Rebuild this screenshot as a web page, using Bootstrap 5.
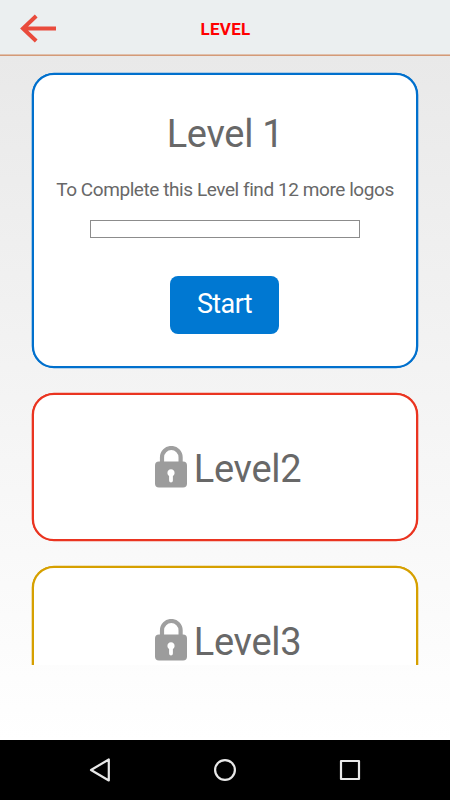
<!DOCTYPE html>
<html lang="en">
<head>
<meta charset="utf-8">
<meta name="viewport" content="width=device-width, initial-scale=1">
<title>Level</title>
<link href="https://cdn.jsdelivr.net/npm/bootstrap@5.3.0/dist/css/bootstrap.min.css" rel="stylesheet">
<style>
body { font-family: Roboto, "Liberation Sans", sans-serif; color: #686868; background: linear-gradient(#e9e9e9 56px, #fff 740px); }
.topbar { height: 56px; background: #ebeff0; border-bottom: 1px solid #d39a78; box-shadow: inset 0 -1px #e0c0ac; padding: 0 20px 0 19px; }
.topbar svg, .topbar-end { width: 38px; }
.topbar-title { font-size: 17px; line-height: 20px; font-weight: 700; letter-spacing: .3px; color: #f00; padding: 2px 0 0 2px; }
.levels { height: 609px; padding: 17px 32px 0; gap: 25px; }
.level-card { border: 2px solid var(--edge); box-shadow: 0 0 0 .3px var(--edge); border-radius: 22px; background: #fff; }
.level-open { height: 295px; --edge: #0070cd; }
.level-two { height: 148px; --edge: #ea3420; }
.level-three { height: 148px; --edge: #d6a000; }
.level-name { font-size: 38px; line-height: 44px; font-weight: 400; letter-spacing: -.3px; }
.level-open .level-name { margin-top: 37px; }
.level-hint { font-size: 19px; line-height: 22px; margin-top: 23px; letter-spacing: -.43px; }
.level-progress { width: 270px; height: 18px; margin-top: 19px; border: 1px solid #8c8c8c; border-radius: 0; background: #fff; }
.btn-start { width: 109px; height: 58px; margin: 38px 1px 0 0; padding: 0 0 3px; border: 0; border-radius: 8px; background: #0078d2; color: #fff; font-size: 27px; line-height: 32px; letter-spacing: -.6px; }
.level-locked { padding: 1px 0 0 6px; gap: 6px; }
.level-locked .level-name { padding-top: 3px; }
.softkeys { height: 60px; margin-top: 75px; background: #000; padding: 0 88px; }
</style>
</head>
<body class="vh-100 overflow-hidden">
<header class="topbar d-flex align-items-center justify-content-between">
  <svg height="30" viewBox="0 0 38 30" fill="none" stroke="#e94b3c" stroke-width="4"><path d="M37 15.5H4M17.2 3 4 15.5 17.2 28"/></svg>
  <div class="topbar-title">LEVEL</div>
  <div class="topbar-end"></div>
</header>
<main class="levels d-flex flex-column overflow-hidden">
  <section class="level-card level-open d-flex flex-column align-items-center flex-shrink-0">
    <h1 class="level-name mb-0">Level 1</h1>
    <p class="level-hint mb-0 text-nowrap">To Complete this Level find 12 more logos</p>
    <div class="progress level-progress" role="progressbar" aria-valuenow="0" aria-valuemin="0" aria-valuemax="12"></div>
    <button class="btn btn-start" type="button">Start</button>
  </section>
  <section class="level-card level-two level-locked d-flex align-items-center justify-content-center flex-shrink-0">
    <svg width="33" height="44" viewBox="0 0 33 44"><path d="M7 16v-4.7a9.3 9.3 0 0 1 18.6 0V16" fill="none" stroke="#9f9f9f" stroke-width="4.2"/><rect x="0" y="15.5" width="32" height="26" rx="4" fill="#9c9c9c"/><path d="M14.1 30a3.6 3.6 0 1 1 3.8 0v4.6a1.9 1.9 0 0 1-3.8 0z" fill="#fff"/></svg>
    <h2 class="level-name mb-0">Level2</h2>
  </section>
  <section class="level-card level-three level-locked d-flex align-items-center justify-content-center flex-shrink-0">
    <svg width="33" height="44" viewBox="0 0 33 44"><path d="M7 16v-4.7a9.3 9.3 0 0 1 18.6 0V16" fill="none" stroke="#9f9f9f" stroke-width="4.2"/><rect x="0" y="15.5" width="32" height="26" rx="4" fill="#9c9c9c"/><path d="M14.1 30a3.6 3.6 0 1 1 3.8 0v4.6a1.9 1.9 0 0 1-3.8 0z" fill="#fff"/></svg>
    <h2 class="level-name mb-0">Level3</h2>
  </section>
</main>
<footer class="softkeys d-flex align-items-center justify-content-between">
  <svg width="24" height="24" viewBox="0 0 24 24" fill="none" stroke="#e8e8e8" stroke-width="2.2" stroke-linejoin="round"><path d="M20.8 1.5v21L3 12z"/></svg>
  <svg width="24" height="24" viewBox="0 0 24 24" fill="none" stroke="#e8e8e8" stroke-width="2.2"><circle cx="12" cy="12" r="9.9"/></svg>
  <svg width="24" height="24" viewBox="0 0 24 24" fill="none" stroke="#e8e8e8" stroke-width="2.2" stroke-linejoin="round"><path d="M3 3h18v18H3z"/></svg>
</footer>
<script src="https://cdn.jsdelivr.net/npm/bootstrap@5.3.0/dist/js/bootstrap.bundle.min.js"></script>
</body>
</html>
